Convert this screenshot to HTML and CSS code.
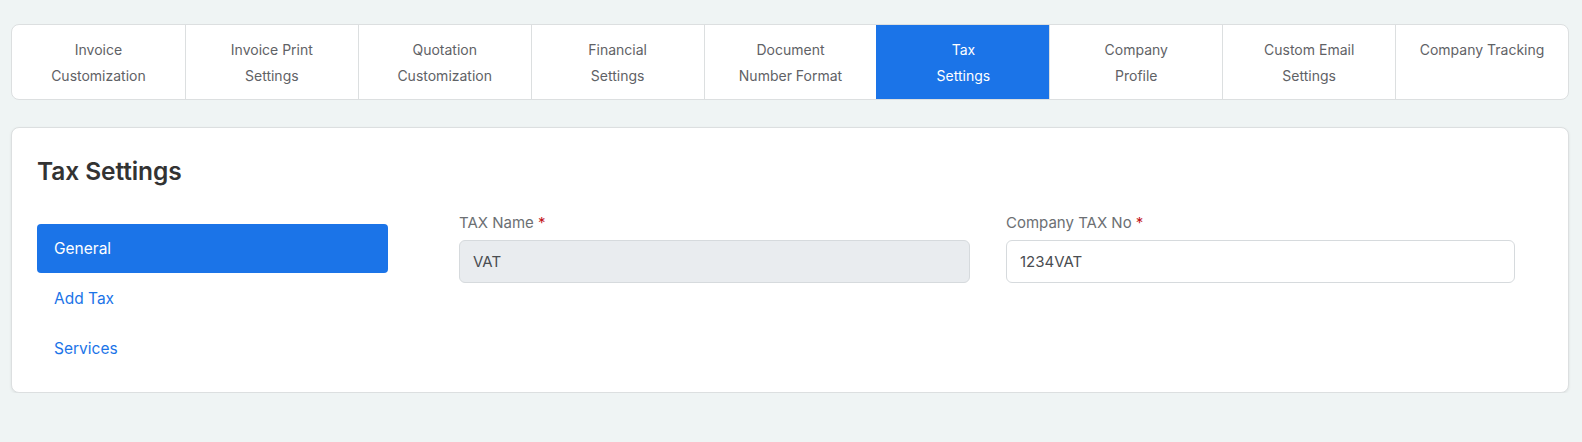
FILE: index.html
```html
<!DOCTYPE html>
<html lang="en">
<head>
<meta charset="utf-8">
<title>Tax Settings</title>
<link rel="stylesheet" href="styles.css">
</head>
<body>
<div class="page">
  <nav class="tabs">
    <a class="tab">Invoice<br>Customization</a>
    <a class="tab">Invoice Print<br>Settings</a>
    <a class="tab">Quotation<br>Customization</a>
    <a class="tab">Financial<br>Settings</a>
    <a class="tab">Document<br>Number Format</a>
    <a class="tab active">Tax<br>Settings</a>
    <a class="tab">Company<br>Profile</a>
    <a class="tab">Custom Email<br>Settings</a>
    <a class="tab">Company Tracking</a>
  </nav>

  <section class="card">
    <h2 class="card-title">Tax Settings</h2>
    <div class="layout">
      <ul class="side-nav">
        <li class="side-item active">General</li>
        <li class="side-item">Add Tax</li>
        <li class="side-item">Services</li>
      </ul>
      <div class="fields">
        <div class="field">
          <label class="label">TAX Name <span class="req">*</span></label>
          <div class="input disabled">VAT</div>
        </div>
        <div class="field">
          <label class="label">Company TAX No <span class="req">*</span></label>
          <div class="input">1234VAT</div>
        </div>
      </div>
    </div>
  </section>
</div>
</body>
</html>
```

FILE: styles.css
```css
* { box-sizing: border-box; }

html, body {
  margin: 0;
  padding: 0;
  background: #eff4f4;
  font-family: Inter, "Noto Sans", Arial, sans-serif;
  color: #333;
}

.page {
  padding: 24px 13px 0 11px;
}

.tabs {
  display: grid;
  grid-template-columns: repeat(9, 1fr);
  background: #fff;
  border: 1px solid #dcdfe0;
  border-radius: 8px;
  overflow: hidden;
}

.tab {
  display: block;
  text-align: center;
  font-size: 14px;
  line-height: 26px;
  color: #5f6266;
  padding: 12px 6px 10px;
  border-left: 1px solid #dcdfe0;
  text-decoration: none;
}

.tab:first-child { border-left: none; }

.tab.active {
  background: #1b74e8;
  color: #fff;
  border-left-color: #1b74e8;
}

.card {
  margin-top: 27px;
  background: #fff;
  border: 1px solid #dcdfe0;
  border-radius: 8px;
  box-shadow: 0 1px 3px rgba(0, 0, 0, 0.08);
  padding: 29px 25px 19px 25px;
}

.card-title {
  margin: 0;
  font-size: 24.5px;
  line-height: 28px;
  font-weight: 600;
  color: #333;
  letter-spacing: -0.1px;
}

.layout {
  display: grid;
  grid-template-columns: 351px 1fr;
  column-gap: 71px;
  margin-top: 27px;
}

.side-nav {
  list-style: none;
  margin: 12px 0 0;
  padding: 0;
  display: flex;
  flex-direction: column;
  gap: 1px;
}

.side-item {
  height: 49px;
  display: flex;
  align-items: center;
  padding-left: 17px;
  font-size: 15.5px;
  color: #1b74e8;
  border-radius: 4px;
}

.side-item.active {
  background: #1b74e8;
  color: #fff;
}

.fields {
  display: grid;
  grid-template-columns: 511px 509px;
  column-gap: 36px;
  align-content: start;
}

.field {
  display: flex;
  flex-direction: column;
}

.label {
  font-size: 15px;
  line-height: 22px;
  color: #6c6f73;
  margin-bottom: 6px;
}

.req {
  color: #c4161c;
}

.input {
  height: 43px;
  border: 1px solid #d6dadd;
  border-radius: 6px;
  padding: 0 13px;
  display: flex;
  align-items: center;
  font-size: 15px;
  color: #4a4d51;
  background: #fff;
}

.input.disabled {
  background: #e9ecef;
}
```
